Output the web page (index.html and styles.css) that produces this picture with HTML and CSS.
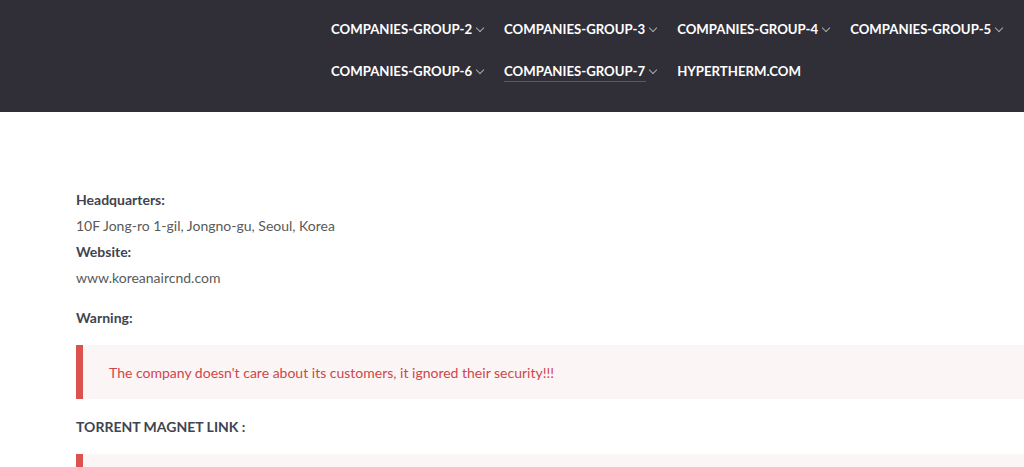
FILE: index.html
```html
<!DOCTYPE html>
<html lang="en">

<head>
    <meta charset="UTF-8">
    <meta name="viewport" content="width=device-width, initial-scale=1.0">
    <title>Korean Air CND</title>
    <link rel="stylesheet" href="styles.css">
</head>

<body>
    <header class="site-header">
        <div class="logo-space"></div>
        <nav class="main-nav">
            <a class="nav-item">COMPANIES-GROUP-2<span class="chev"></span></a>
            <a class="nav-item">COMPANIES-GROUP-3<span class="chev"></span></a>
            <a class="nav-item">COMPANIES-GROUP-4<span class="chev"></span></a>
            <a class="nav-item">COMPANIES-GROUP-5<span class="chev"></span></a>
            <a class="nav-item">COMPANIES-GROUP-6<span class="chev"></span></a>
            <a class="nav-item active">COMPANIES-GROUP-7<span class="chev"></span></a>
            <a class="nav-item">HYPERTHERM.COM</a>
        </nav>
    </header>

    <main class="content">
        <p class="label">Headquarters:</p>
        <p class="value">10F Jong-ro 1-gil, Jongno-gu, Seoul, Korea</p>
        <p class="label">Website:</p>
        <p class="value">www.koreanaircnd.com</p>

        <p class="label warn-label">Warning:</p>
        <div class="alert">The company doesn't care about its customers, it ignored their security!!!</div>

        <p class="label torrent-label">TORRENT MAGNET LINK :</p>
        <div class="alert"></div>
    </main>
</body>

</html>
```

FILE: styles.css
```css
body {
    margin: 0;
    font-family: Lato, "Open Sans", sans-serif;
    background-color: #fff;
    color: #555;
    overflow: hidden;
}

.site-header {
    display: flex;
    height: 112px;
    background-color: #302f38;
}

.logo-space {
    width: 331px;
    flex-shrink: 0;
}

.main-nav {
    display: flex;
    flex-wrap: wrap;
    align-content: flex-start;
    padding-top: 18px;
    row-gap: 20px;
    column-gap: 19px;
}

.nav-item {
    display: flex;
    align-items: center;
    height: 22px;
    font-size: 13.2px;
    font-weight: bold;
    color: #fff;
    text-decoration: none;
    white-space: pre;
}

.nav-item.active {
    background: linear-gradient(#5b5a62, #5b5a62) no-repeat left bottom / calc(100% - 12px) 1px;
}

.chev {
    display: inline-block;
    width: 5px;
    height: 5px;
    margin: -3px 2px 0 5px;
    border-right: 1px solid #aaa;
    border-bottom: 1px solid #aaa;
    transform: rotate(45deg);
}

.content {
    padding: 75px 0 0 76px;
    font-size: 14px;
}

.content p {
    margin: 0;
    line-height: 26px;
}

.label {
    font-weight: bold;
    color: #404450;
}

.value {
    color: #5a5a5a;
}

.warn-label {
    margin-top: 14px !important;
}

.alert {
    height: 54px;
    margin-top: 14px;
    padding-left: 26px;
    display: flex;
    align-items: center;
    background-color: #fcf5f5;
    border-left: 7px solid #dc524f;
    color: #d0454a;
}

.torrent-label {
    margin-top: 15px !important;
}
```
